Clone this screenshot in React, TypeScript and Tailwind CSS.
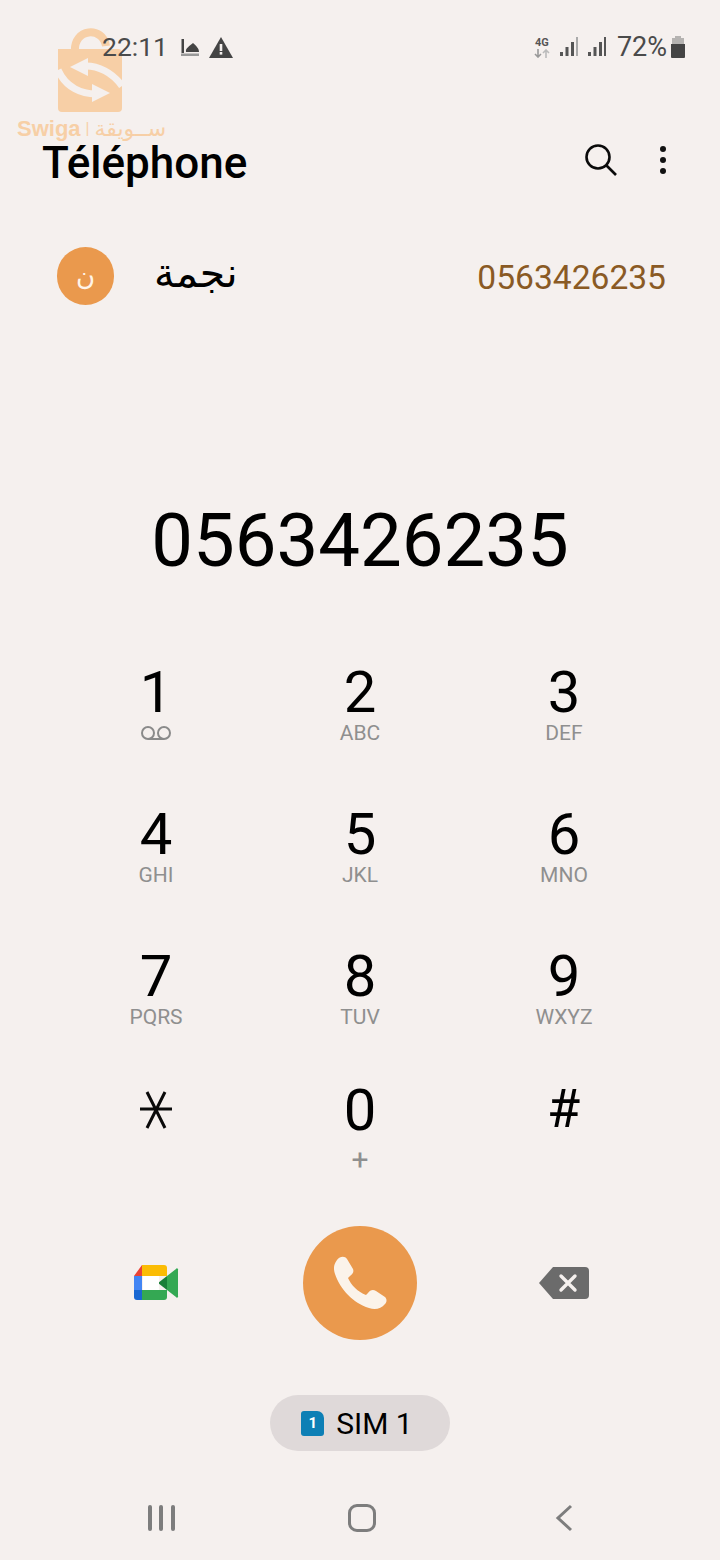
import React from "react";

const keys = [
  { digit: "1", sub: "" },
  { digit: "2", sub: "ABC" },
  { digit: "3", sub: "DEF" },
  { digit: "4", sub: "GHI" },
  { digit: "5", sub: "JKL" },
  { digit: "6", sub: "MNO" },
  { digit: "7", sub: "PQRS" },
  { digit: "8", sub: "TUV" },
  { digit: "9", sub: "WXYZ" },
];

function Signal({ faded }: { faded?: boolean }) {
  return (
    <svg width="18" height="22" viewBox="0 0 18 22">
      <rect x="0" y="16" width="3" height="4" fill="#555" />
      <rect x="5.500" y="11" width="3" height="9" fill="#555" />
      <rect x="11" y="6" width="3" height="14" fill="#555" />
      <rect x="16" y="1" width="2" height="19" fill={faded ? "#aaa" : "#555"} />
    </svg>
  );
}

function VoicemailIcon() {
  return (
    <svg width="32" height="16" viewBox="0 0 32 16" fill="none" stroke="#8a8a8a" strokeWidth="2">
      <circle cx="8" cy="8" r="6" />
      <circle cx="24" cy="8" r="6" />
      <path d="M8 14h16" />
    </svg>
  );
}

function Key({ digit, sub }: { digit: string; sub: string }) {
  return (
    <div className="flex h-[142px] flex-col items-center">
      <div className="mt-[8px] h-[56px] text-[58px] leading-[56px] text-black">{digit}</div>
      <div className="flex h-[26px] items-center text-[21px] leading-[26px] text-[#8f8f8f]">
        {digit === "1" ? <VoicemailIcon /> : sub}
      </div>
    </div>
  );
}

function MeetIcon() {
  return (
    <svg width="46" height="38" viewBox="0 0 46 38">
      <path d="M9 1h22a3 3 0 0 1 3 3v8H9z" fill="#fbbc04" />
      <path d="M9 1v11H1z" fill="#ea4335" />
      <path d="M1 12h8v14H1z" fill="#4285f4" />
      <path d="M1 26h8v10H4a3 3 0 0 1-3-3z" fill="#1967d2" />
      <path d="M9 26h25v7a3 3 0 0 1-3 3H9z" fill="#34a853" />
      <path d="M34 12v14l-9-7z" fill="#188038" />
      <path d="M34 12l9-7a1 1 0 0 1 2 1v26a1 1 0 0 1-2 1l-9-7z" fill="#34a853" />
      <rect x="10" y="12" width="16" height="14" fill="#ffffff" />
    </svg>
  );
}

export default function App() {
  return (
    <div
      className="relative flex h-[1560px] w-[720px] flex-col overflow-hidden bg-[#f5f0ee]"
      style={{ fontFamily: "Roboto, 'Noto Sans', sans-serif" }}
    >
      {/* watermark */}
      <div className="pointer-events-none absolute left-[17px] top-[28px] flex flex-col items-start">
        <svg width="64" height="84" viewBox="0 0 64 84" className="ml-[41px]">
          <path d="M17 24c-2-24 28-26 31-6" fill="none" stroke="#f7cfa6" strokeWidth="8" />
          <path d="M0 21h60a4 4 0 0 1 4 4v55a4 4 0 0 1-4 4H4a4 4 0 0 1-4-4z" fill="#f7cfa6" />
          <path d="M28 38C40 38 54 44 64 58" fill="none" stroke="#f5f0ee" strokeWidth="7" />
          <path d="M12 39l18-9v18z" fill="#f5f0ee" />
          <path d="M38 66C24 66 8 60 0 42" fill="none" stroke="#f5f0ee" strokeWidth="7" />
          <path d="M52 65l-18-9v18z" fill="#f5f0ee" />
        </svg>
        <div className="mt-[6px] flex items-center whitespace-nowrap text-[#f7cfa6]">
          <span className="text-[22px] font-bold leading-[22px]" style={{ fontFamily: "'Liberation Sans', sans-serif" }}>
            Swiga
          </span>
          <span className="ml-[5px] text-[16px] leading-[22px]">|</span>
          <span className="ml-[5px] text-[22px] leading-[22px]" style={{ fontFamily: "'DejaVu Sans', sans-serif" }}>
            ســويقة
          </span>
        </div>
      </div>

      {/* status bar */}
      <div className="relative flex h-[96px] items-center justify-between pb-[2px] pl-[102px] pr-[34px]">
        <div className="flex items-center text-[#4a4a4a]">
          <span className="text-[26.500px] leading-none">22:11</span>
          <svg width="18" height="17" viewBox="0 0 18 17" className="ml-[13px]">
            <rect x="0.500" y="0" width="2.500" height="14" fill="#444" />
            <path d="M5 13c-1-4 4-6 7-9 3 3 6 5 6 9z" fill="#444" />
            <path d="M0 14.500h18v2.500H0z" fill="#999" />
          </svg>
          <svg width="24" height="21" viewBox="0 0 24 21" className="ml-[10px]">
            <path d="M12 0l12 21H0z" fill="#444" />
            <rect x="10.700" y="7" width="2.600" height="7" fill="#f5f0ee" />
            <rect x="10.700" y="15" width="2.600" height="2.600" fill="#f5f0ee" />
          </svg>
        </div>
        <div className="flex items-center text-[#4a4a4a]">
          <div className="flex w-[18px] flex-col items-center">
            <span className="text-[11px] font-bold leading-[12px] text-[#555]">4G</span>
            <svg width="16" height="9" viewBox="0 0 16 9" fill="none" strokeWidth="1.600">
              <path d="M4 0v8M1 5l3 3 3-3" stroke="#999" />
              <path d="M12 9V1M9 4l3-3 3 3" stroke="#bbb" />
            </svg>
          </div>
          <div className="ml-[9px]"><Signal faded /></div>
          <div className="ml-[10px]"><Signal /></div>
          <span className="ml-[11px] text-[27px] leading-none">72%</span>
          <svg width="16" height="23" viewBox="0 0 16 23" className="ml-[3px]">
            <path d="M5 0h6v2h3v6H2V2h3z" fill="#b5b3b1" />
            <path d="M1 8h14v13a1 1 0 0 1-1 1H2a1 1 0 0 1-1-1z" fill="#444" />
          </svg>
        </div>
      </div>

      {/* title bar */}
      <div className="mt-[33px] flex h-[64px] items-center justify-between pb-[2px] pl-[42px] pr-[54px]">
        <h1 className="pt-[6px] text-[44px] font-medium leading-none text-black">Téléphone</h1>
        <div className="flex items-center gap-[43px]">
          <svg width="32" height="32" viewBox="0 0 32 32" fill="none" stroke="#0a0a0a" strokeWidth="2.600">
            <circle cx="13" cy="13" r="11.500" />
            <path d="M21.500 21.500L31 31" />
          </svg>
          <div className="flex flex-col gap-[5px]">
            <span className="h-[6px] w-[6px] rounded-full bg-[#111]" />
            <span className="h-[6px] w-[6px] rounded-full bg-[#111]" />
            <span className="h-[6px] w-[6px] rounded-full bg-[#111]" />
          </div>
        </div>
      </div>

      {/* contact suggestion */}
      <div className="mt-[53px] flex h-[60px] items-center justify-between pl-[57px] pr-[54px]">
        <div className="flex items-center">
          <div className="flex h-[58px] w-[57px] items-center justify-center rounded-full bg-[#ea994d] text-[26px] text-[#fff4e8]">
            ن
          </div>
          <span className="ml-[40px] pb-[6px] text-[41px] leading-none text-black" style={{ fontFamily: "'DejaVu Sans', sans-serif" }}>
            نجمة
          </span>
        </div>
        <span className="pt-[4px] text-[33.600px] leading-none text-[#8a5a24]">0563426235</span>
      </div>

      {/* dialed number */}
      <div className="mt-[191px] text-center text-[74.300px] leading-[88px] text-black">0563426235</div>

      {/* keypad */}
      <div className="mt-[71px] grid grid-cols-3 px-[54px]">
        {keys.map((k) => (
          <Key key={k.digit} digit={k.digit} sub={k.sub} />
        ))}
        <div className="mt-[-5px] flex h-[149px] flex-col items-center">
          <svg width="34" height="40" viewBox="0 0 34 40" className="mt-[13px]" fill="none" stroke="#0a0a0a" strokeWidth="3">
            <path d="M1 19h32M8 2l18 36M26 2L8 38" />
          </svg>
        </div>
        <div className="mt-[-5px] flex h-[149px] flex-col items-center">
          <div className="mt-[1px] h-[64px] text-[58px] leading-[64px] text-black">0</div>
          <div className="mt-[2px] text-[30px] leading-[32px] text-[#8f8f8f]">+</div>
        </div>
        <div className="mt-[-5px] flex h-[149px] flex-col items-center">
          <div className="mr-[1px] h-[64px] text-[54px] leading-[64px] text-black">#</div>
        </div>
      </div>

      {/* actions */}
      <div className="grid grid-cols-3 items-center px-[54px]">
        <div className="flex justify-center"><MeetIcon /></div>
        <div className="flex justify-center">
          <div className="flex h-[114px] w-[114px] items-center justify-center rounded-full bg-[#ea994d]">
            <svg width="54" height="54" viewBox="0 0 54 54" fill="#fbf3ea">
              <path d="M4 4C7 0 12 0 14 3L20 13C21 16 20 18 17 20L15 22C18 29 25 36 33 39L35 37C37 34 40 33 43 35L52 41C54 43 54 46 52 48C48 53 42 54 36 52C20 47 7 33 2 18C0 12 1 8 4 4Z" />
            </svg>
          </div>
        </div>
        <div className="flex justify-center">
          <svg width="50" height="32" viewBox="0 0 50 32">
            <path d="M14 0h32a4 4 0 0 1 4 4v24a4 4 0 0 1-4 4H14L0 16z" fill="#6b6b6b" />
            <path d="M22 9l14 14M36 9L22 23" stroke="#f5f0ee" strokeWidth="3.400" strokeLinecap="round" />
          </svg>
        </div>
      </div>

      {/* sim */}
      <div className="mt-[55px] flex justify-center">
        <div className="flex h-[56px] w-[180px] items-center justify-center rounded-full bg-[#dfd9d9] pr-[6px]">
          <div className="flex h-[25px] w-[23px] items-center justify-center rounded-[3px] rounded-tr-[7px] bg-[#0d7fb5] text-[15px] font-bold text-white">
            1
          </div>
          <span className="ml-[12px] pt-[2px] text-[30px] leading-none text-black">SIM 1</span>
        </div>
      </div>

      {/* nav */}
      <div className="mt-[53px] grid grid-cols-3 items-center px-[54px]">
        <div className="flex justify-center gap-[7.500px] pl-[10px]">
          <span className="h-[26px] w-[4px] rounded-full bg-[#7d7d7d]" />
          <span className="h-[26px] w-[4px] rounded-full bg-[#7d7d7d]" />
          <span className="h-[26px] w-[4px] rounded-full bg-[#7d7d7d]" />
        </div>
        <div className="flex justify-center">
          <span className="ml-[4px] h-[28px] w-[28px] rounded-[9px] border-[3px] border-[#7d7d7d]" />
        </div>
        <div className="flex justify-center">
          <svg width="18" height="28" viewBox="0 0 18 28" fill="none" stroke="#7d7d7d" strokeWidth="3">
            <path d="M16 2L3 14l13 12" />
          </svg>
        </div>
      </div>
    </div>
  );
}
